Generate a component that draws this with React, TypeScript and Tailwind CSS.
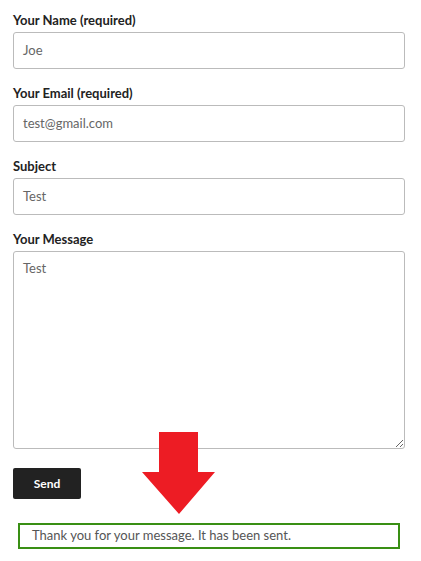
import React from "react";

function Field({ label, value }: { label: string; value: string }) {
  return (
    <div className="mb-[14px]">
      <div className="text-[13px] leading-[20px] font-bold text-[#222] mb-[2px]">{label}</div>
      <div className="h-[37px] w-[392px] border border-[#bbb] rounded-[3px] bg-white px-[9px] flex items-center text-[13px] text-[#666]">
        {value}
      </div>
    </div>
  );
}

export default function App() {
  return (
    <div
      className="relative w-[421px] h-[561px] bg-white pl-[13px] pt-[10px]"
      style={{ fontFamily: "Lato, 'Liberation Sans', sans-serif" }}
    >
      <Field label="Your Name (required)" value="Joe" />
      <Field label="Your Email (required)" value="test@gmail.com" />
      <Field label="Subject" value="Test" />
      <div>
        <div className="text-[13px] leading-[20px] font-bold text-[#222] mb-[2px]">Your Message</div>
        <textarea
          defaultValue="Test"
          className="block h-[198px] w-[392px] border border-[#bbb] rounded-[3px] bg-white px-[9px] pt-[7px] text-[13px] text-[#666] outline-none resize-y"
          style={{ fontFamily: "Lato, 'Liberation Sans', sans-serif" }}
        />
      </div>
      <button className="mt-[19px] w-[68px] h-[31px] bg-[#222] text-white text-[12px] font-bold rounded-[2px] block">
        Send
      </button>
      <div className="mt-[24px] ml-[5px] w-[382px] h-[26px] border-2 border-[#398f14] flex items-center pl-[12px] text-[13px] text-[#555]">
        Thank you for your message. It has been sent.
      </div>
      <svg className="absolute left-0 top-0 pointer-events-none" width="421" height="561">
        <polygon points="159,432 198,432 198,472 215,472 179,514 142,472 159,472" fill="#ed1c24" />
      </svg>
    </div>
  );
}
